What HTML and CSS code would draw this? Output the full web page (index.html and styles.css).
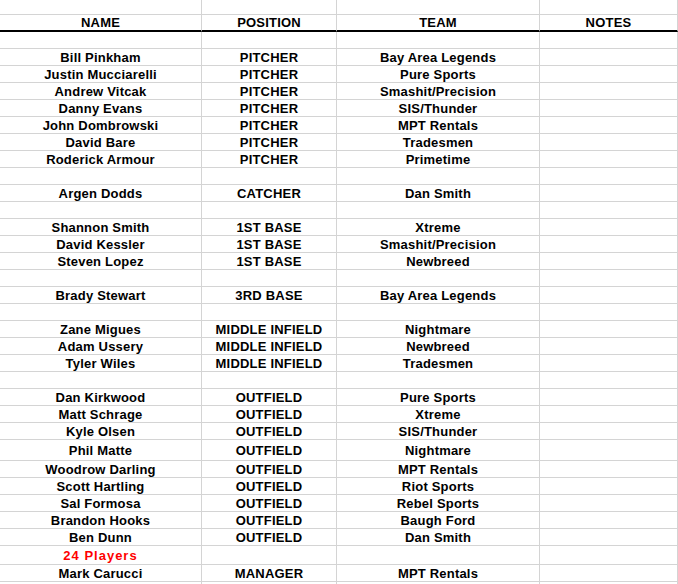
FILE: index.html
```html
<!DOCTYPE html>
<html>
<head>
<meta charset="utf-8">
<link rel="stylesheet" href="styles.css">
</head>
<body>
<div class="sheet">
  <div class="r top"><div class="c"></div><div class="c"></div><div class="c"></div><div class="c"></div></div>
  <div class="r hdr"><div class="c">NAME</div><div class="c">POSITION</div><div class="c">TEAM</div><div class="c">NOTES</div></div>
  <div class="r"><div class="c"></div><div class="c"></div><div class="c"></div><div class="c"></div></div>
  <div class="r"><div class="c">Bill Pinkham</div><div class="c">PITCHER</div><div class="c">Bay Area Legends</div><div class="c"></div></div>
  <div class="r"><div class="c">Justin Mucciarelli</div><div class="c">PITCHER</div><div class="c">Pure Sports</div><div class="c"></div></div>
  <div class="r"><div class="c">Andrew Vitcak</div><div class="c">PITCHER</div><div class="c">Smashit/Precision</div><div class="c"></div></div>
  <div class="r"><div class="c">Danny Evans</div><div class="c">PITCHER</div><div class="c">SIS/Thunder</div><div class="c"></div></div>
  <div class="r"><div class="c">John Dombrowski</div><div class="c">PITCHER</div><div class="c">MPT Rentals</div><div class="c"></div></div>
  <div class="r"><div class="c">David Bare</div><div class="c">PITCHER</div><div class="c">Tradesmen</div><div class="c"></div></div>
  <div class="r"><div class="c">Roderick Armour</div><div class="c">PITCHER</div><div class="c">Primetime</div><div class="c"></div></div>
  <div class="r"><div class="c"></div><div class="c"></div><div class="c"></div><div class="c"></div></div>
  <div class="r"><div class="c">Argen Dodds</div><div class="c">CATCHER</div><div class="c">Dan Smith</div><div class="c"></div></div>
  <div class="r"><div class="c"></div><div class="c"></div><div class="c"></div><div class="c"></div></div>
  <div class="r"><div class="c">Shannon Smith</div><div class="c">1ST BASE</div><div class="c">Xtreme</div><div class="c"></div></div>
  <div class="r"><div class="c">David Kessler</div><div class="c">1ST BASE</div><div class="c">Smashit/Precision</div><div class="c"></div></div>
  <div class="r"><div class="c">Steven Lopez</div><div class="c">1ST BASE</div><div class="c">Newbreed</div><div class="c"></div></div>
  <div class="r"><div class="c"></div><div class="c"></div><div class="c"></div><div class="c"></div></div>
  <div class="r"><div class="c">Brady Stewart</div><div class="c">3RD BASE</div><div class="c">Bay Area Legends</div><div class="c"></div></div>
  <div class="r"><div class="c"></div><div class="c"></div><div class="c"></div><div class="c"></div></div>
  <div class="r"><div class="c">Zane Migues</div><div class="c">MIDDLE INFIELD</div><div class="c">Nightmare</div><div class="c"></div></div>
  <div class="r"><div class="c">Adam Ussery</div><div class="c">MIDDLE INFIELD</div><div class="c">Newbreed</div><div class="c"></div></div>
  <div class="r"><div class="c">Tyler Wiles</div><div class="c">MIDDLE INFIELD</div><div class="c">Tradesmen</div><div class="c"></div></div>
  <div class="r"><div class="c"></div><div class="c"></div><div class="c"></div><div class="c"></div></div>
  <div class="r"><div class="c">Dan Kirkwood</div><div class="c">OUTFIELD</div><div class="c">Pure Sports</div><div class="c"></div></div>
  <div class="r"><div class="c">Matt Schrage</div><div class="c">OUTFIELD</div><div class="c">Xtreme</div><div class="c"></div></div>
  <div class="r"><div class="c">Kyle Olsen</div><div class="c">OUTFIELD</div><div class="c">SIS/Thunder</div><div class="c"></div></div>
  <div class="r tall"><div class="c">Phil Matte</div><div class="c">OUTFIELD</div><div class="c">Nightmare</div><div class="c"></div></div>
  <div class="r"><div class="c">Woodrow Darling</div><div class="c">OUTFIELD</div><div class="c">MPT Rentals</div><div class="c"></div></div>
  <div class="r"><div class="c">Scott Hartling</div><div class="c">OUTFIELD</div><div class="c">Riot Sports</div><div class="c"></div></div>
  <div class="r"><div class="c">Sal Formosa</div><div class="c">OUTFIELD</div><div class="c">Rebel Sports</div><div class="c"></div></div>
  <div class="r"><div class="c">Brandon Hooks</div><div class="c">OUTFIELD</div><div class="c">Baugh Ford</div><div class="c"></div></div>
  <div class="r"><div class="c">Ben Dunn</div><div class="c">OUTFIELD</div><div class="c">Dan Smith</div><div class="c"></div></div>
  <div class="r total"><div class="c red">24 Players</div><div class="c"></div><div class="c"></div><div class="c"></div></div>
  <div class="r"><div class="c">Mark Carucci</div><div class="c">MANAGER</div><div class="c">MPT Rentals</div><div class="c"></div></div>
  <div class="r"><div class="c"></div><div class="c"></div><div class="c"></div><div class="c"></div></div>
</div>
</body>
</html>
```
FILE: styles.css
```css
html, body {
  margin: 0;
  padding: 0;
  background: #ffffff;
}
body {
  width: 678px;
  height: 584px;
  overflow: hidden;
  font-family: "Liberation Sans", Arial, sans-serif;
  font-size: 13px;
  font-weight: bold;
  color: #000;
}
.sheet {
  display: flex;
  flex-direction: column;
}
.r {
  display: grid;
  grid-template-columns: 202px 135px 203px 138px;
  height: 17px;
  flex: none;
}
.r.top { height: 15px; }
.r.tall { height: 21px; }
.r.total { height: 19px; }
.c {
  box-sizing: border-box;
  border-right: 1px solid #d4d4d4;
  border-bottom: 1px solid #d4d4d4;
  display: flex;
  align-items: center;
  justify-content: center;
  padding-top: 1px;
  line-height: 16px;
  letter-spacing: 0.2px;
  white-space: nowrap;
  overflow: hidden;
}
.r.hdr .c {
  border-bottom: 2px solid #000;
  padding-top: 0;
}
.red {
  color: #ff0000;
  letter-spacing: 1px;
}
```
